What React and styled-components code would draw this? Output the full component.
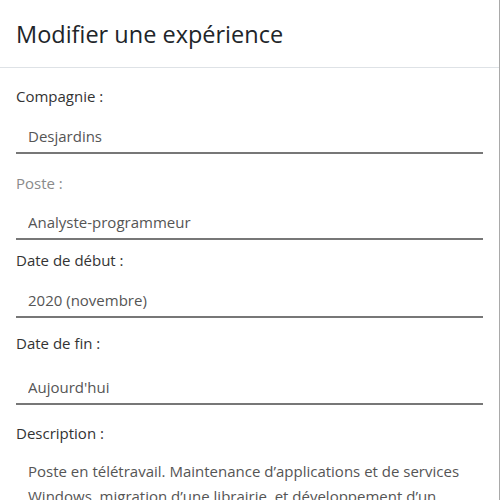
import React from "react";
import styled, { createGlobalStyle } from "styled-components";

const GlobalStyle = createGlobalStyle`
  html, body {
    margin: 0;
    padding: 0;
    overflow: hidden;
    background: #ffffff;
  }
  * { box-sizing: border-box; }
`;

const Modal = styled.div`
  width: 500px;
  height: 500px;
  overflow: hidden;
  background: #ffffff;
  border-right: 1px solid #a9a9a9;
  font-family: "Open Sans", "Noto Sans", sans-serif;
  display: flex;
  flex-direction: column;
`;

const Header = styled.div`
  padding: 16px 16px 15px;
  border-bottom: 1px solid #dee2e6;
`;

const Title = styled.h5`
  margin: 0;
  font-size: 23.5px;
  line-height: 36px;
  font-weight: 400;
  color: #212529;
`;

const Body = styled.div`
  flex: 1;
  min-height: 0;
  padding: 16px 16px 0;
  display: flex;
  flex-direction: column;
`;

const Field = styled.div`
  display: flex;
  flex-direction: column;
  margin-top: ${(p) => p.$top || 0}px;
`;

const DescField = styled(Field)`
  flex: 1;
  min-height: 0;
`;

const Label = styled.label`
  font-size: 15px;
  line-height: 24px;
  color: ${(p) => (p.$muted ? "#8a8a8a" : "#333333")};
  margin-bottom: ${(p) => p.$gap || 8}px;
`;

const Input = styled.input`
  width: 100%;
  height: 36px;
  border: none;
  border-bottom: 2px solid #777777;
  padding: 6px 12px 4px;
  font-family: inherit;
  font-size: 15px;
  line-height: 24px;
  color: #555555;
  background: #ffffff;
  outline: none;
`;

const TextArea = styled.textarea`
  width: 100%;
  flex: 1;
  min-height: 0;
  border: none;
  padding: 6px 12px 0;
  font-family: inherit;
  font-size: 15px;
  line-height: 25px;
  color: #555555;
  background: #ffffff;
  outline: none;
  resize: none;
  overflow: hidden;
`;

const fields = [
  { label: "Compagnie :", value: "Desjardins", top: 0, gap: 10 },
  { label: "Poste :", value: "Analyste-programmeur", top: 17, gap: 9, muted: true },
  { label: "Date de début :", value: "2020 (novembre)", top: 8, gap: 10 },
  { label: "Date de fin :", value: "Aujourd'hui", top: 13, gap: 14 },
];

export default function App() {
  return (
    <>
      <GlobalStyle />
      <Modal>
        <Header>
          <Title>Modifier une expérience</Title>
        </Header>
        <Body>
          {fields.map((f) => (
            <Field key={f.label} $top={f.top}>
              <Label $muted={f.muted} $gap={f.gap}>{f.label}</Label>
              <Input readOnly value={f.value} />
            </Field>
          ))}
          <DescField $top={16}>
            <Label>Description :</Label>
            <TextArea
              readOnly
              value="Poste en télétravail. Maintenance d’applications et de services Windows, migration d’une librairie, et développement d’un nouveau service."
            />
          </DescField>
        </Body>
      </Modal>
    </>
  );
}
